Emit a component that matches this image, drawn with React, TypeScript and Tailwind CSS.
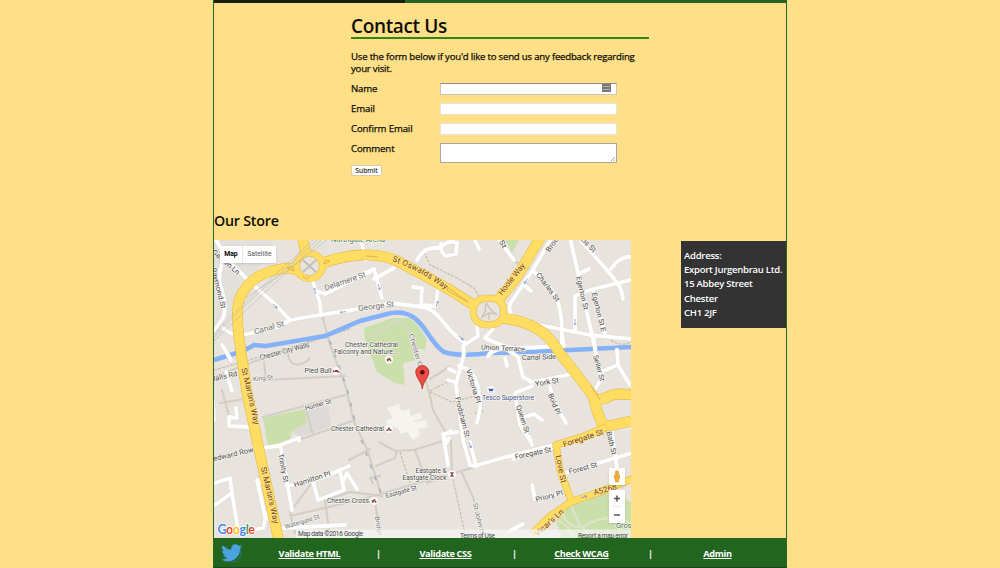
import React from 'react';

type Label = [string, number, number, number, number, string?, number?];

const BROWN = '#74431a';
const GREY = '#707070';
const DARK = '#4c4c4c';

const labels: Label[] = [
  ['Northgate Arena', 358, 240, 0, 54, '#3d7a4a', 7],
  ['Garden Ln', 226, 262, 41, 34],
  ['Raymond St', 218.5, 288, 76, 42],
  ['Delamere St', 345, 281, -19, 43, GREY, 8],
  ['George St', 376, 306, -7, 36, GREY, 8],
  ['Canal St', 269, 327.5, -16, 31, GREY, 8],
  ['Hoole Way', 511.5, 279, -52, 38, BROWN, 8],
  ['Charles St', 548, 287, 53, 34],
  ['Egerton St', 582.5, 293, 77, 34],
  ['Egerton St E', 599, 312, 76, 40],
  ['Brook St', 556, 239, -54, 30],
  ['Francis St', 583, 239, 45, 34],
  ['St', 503, 244, 60, 8],
  ['Chester City Walls', 284.5, 351, -15, 51],
  ['Chester City', 417, 354, 73, 42, GREY, 6.5],
  ['Union Terrace', 503, 348, 3, 44],
  ['Canal Side', 539, 357, -2, 34],
  ['Seller St', 599, 368, 75, 27],
  ['York St', 547, 382, -10, 24],
  ['Bold Pl', 554.5, 404, 68, 22],
  ['Queen St', 523, 419, 72, 29],
  ['Victoria Pl', 473.5, 386, 73, 35],
  ['Frodsham St', 462.5, 417, 76, 41],
  ['King St', 263, 378, -5, 20, GREY, 6.5],
  ['Walls Rd', 223, 376.5, -13, 29],
  ["St Martin's Way", 250.5, 396, 77, 58, BROWN, 8],
  ["St Martin's Way", 270, 495, 77, 58, BROWN, 8],
  ['Hunter St', 318, 404.5, -16, 27, DARK, 6.5],
  ['Bedward Row', 231, 454.5, -13, 46],
  ['Trinity St', 283.5, 468, 79, 29],
  ['Hamilton Pl', 312, 479, -18, 38],
  ['Watergate St', 302, 521.5, -17, 36, GREY, 6.5],
  ['Eastgate St', 401, 491.5, -16, 32, DARK, 6.5],
  ['Bridge St', 379.5, 530, 80, 28, GREY, 6.5],
  ['St John St', 479, 519, 77, 33, GREY, 6.5],
  ['Foregate St', 533, 453, -12, 37],
  ['Foregate St', 583, 438, -18, 42, BROWN, 8],
  ['Love St', 561, 469, 79, 28, BROWN, 8],
  ['Forest St', 583, 468, -14, 29],
  ['Priory Pl', 549, 496, -15, 28],
  ['Bath St', 611.5, 443, 77, 24],
  ["Vicar's Ln", 549, 522.5, -42, 36, BROWN, 8],
  ['A5268', 605, 489.5, -15, 24, BROWN, 8],
  ['Grosvenor Park', 641, 526, 0, 50, '#3d7a4a', 6.5],
  ['Chester Cathedral', 371.5, 344.5, 0, 53, DARK, 6.8],
  ['Falconry and Nature...', 366, 351.5, 0, 64, DARK, 6.8],
  ['Pied Bull', 318, 371, 0, 27, DARK, 6.8],
  ['Chester Cathedral', 357.5, 429, 0, 53, DARK, 6.8],
  ['Chester Cross', 348, 501, 0, 42, DARK, 6.8],
  ['Eastgate &', 431, 471, 0, 31, DARK, 6.8],
  ['Eastgate Clock', 424.5, 478, 0, 44, DARK, 6.8],
  ['Tesco Superstore', 508, 398, 0, 52, '#46558f', 6.8],
];

const mainRoads = [
  'M302 236 L306 254 M279 542 L258 445 L247 393 L240 345 Q235 310 240 298 Q244 287 256 278 Q268 270 287 268 L298 270',
  'M320 264 Q338 257 360 255 Q385 254 401 263 L427 277 L450 290 L475 306',
  'M540 238 L521 270 Q514 282 499 299',
  'M500 318 Q522 320 536 328 Q550 336 559 352 L577 375 L593 396 Q597 414 604 427',
  'M598 400 L606 398 Q612 394 620 394 L635 395 M602 425 L609 426 L635 420',
];

const whiteWide = [
  'M366 260 L363 248 L360 238',
  'M210 252 L232 264 L252 284 L275 304 L289 319',
  'M214 238 Q226 250 220 272 Q218 280 222 291 Q227 308 223 318 L214 331 M223 328 Q233 338 252 333 L278 327 L290 320 L313 316 L352 310 L390 303 L415 306 Q430 306 439 317 Q453 335 465 343',
  'M313 282 L320 303 L321 315',
  'M315 290 L325 294 L345 284 L370 272',
  'M360 275 L374 269 L382 298',
  'M374 279 L394 268',
  'M413 287 L422 288 L421 305 L436 306 L438 286',
  'M417 260 Q424 246 440 248 Q448 239 457 243 L456 254 L446 256 Q440 252 441 244',
  'M473 236 L479 249 M499 240 L514 260',
  'M551 239 L534 268 L510 304 Q508 316 516 318 L540 325 L590 335 L632 339',
  'M533 271 Q548 285 555 295 Q563 310 562 345',
  'M523 284 L531 291',
  'M570 238 L583 295 L594 344 M580 273 L589 269',
  'M581 241 Q604 266 615 280 Q621 285 623 299',
  'M611 269 Q620 255 634 257 M634 279 L590 290 L575 296 L575 330',
  'M593 290 L605 334',
  'M477 326 L478 336 L463 346 L464 354 L460 369 L456 384 L463 440 L470 465 L475 466 L502 458 L557 444',
  'M497 318 L492 330 L485 338 Q510 350 520 348 L564 346 L562 335',
  'M488 357 Q490 350 505 348 L518 357 L523 377 L532 382 L572 374 L570 368',
  'M505 358 L507 366 M532 386 L515 393 L520 425 L531 442 M525 417 L534 414 L542 420',
  'M550 387 L554 401 L566 423 M593 335 L597 362 L603 376 L596 388',
  'M600 372 L618 365 L630 385 M618 364 L617 350',
  'M448 380 L454 382 M449 369 L455 372 M459 366 L470 370 Q481 385 480 408 L477 423',
  'M451 431 L444 435 L445 441 M457 432 L443 434 L448 465',
  'M222 345 L231 360 M226 372 L232 391',
  'M214 420 L213 400 M236 408 L237 418 L229 417 L229 426 L251 427',
  'M215 483 L230 478 L232 493 L215 505 M232 493 L238 530 M240 532 L263 528 M266 514 L264 526',
  'M262 484 L259 481 M257 480 L266 520',
  'M255 449 L278 446 L299 438 L299 441',
  'M281 448 L292 510 M287 486 L322 478 L349 466 M313 481 L318 500 L344 490 L340 471 M342 484 L347 473 M348 475 L357 489',
  'M514 459 L551 449 M529 437 L532 445 M532 485 L535 499 L560 493 M510 531 L523 524 M562 474 L632 453',
  'M611 426 L617 468 M449 438 L446 444',
  'M470 442 L476 466',
  'M284 528 L345 525',
];

const paths = [
  'M214 377 L250 363 L320 338 L350 326',
  'M322 315 L330 345 L346 388 L354 422 L367 449 L382 497',
  'M264 362 L266 380 L345 376',
  'M288 354 Q290 367 301 364 Q309 361 309 358',
  'M222 390 L230 420 M220 403 L244 399 M263 417 L345 395',
  'M306 410 L313 435 L355 420 M313 435 L298 440',
  'M414 338 L421 366 Q428 385 433 410 Q440 423 451 441 L452 475',
  'M379 442 L395 451 L414 450 L443 441 M376 466 L395 458 L397 451 M415 450 L427 483 L461 471 L475 467 M461 471 L473 497 L484 538',
  'M326 500 L350 492 L382 496 M290 516 L363 499 L442 476',
  'M310 485 L290 512 L295 533 M349 460 L370 449 M325 500 L330 538 M375 500 L380 538',
  'M373 483 L370 478 L380 476 M430 379 L449 367 M475 413 L483 411',
];

function Road({ d, color, width }: { d: string; color: string; width: number }) {
  return <path d={d} stroke={color} strokeWidth={width} fill="none" strokeLinecap="round" strokeLinejoin="round" />;
}

function Poi({ x, y, color = '#8a4d43', kind = 'dots' }: { x: number; y: number; color?: string; kind?: string }) {
  return (
    <g transform={`translate(${x} ${y})`}>
      <circle r="4.2" fill="#fff" stroke="#d8d3cb" strokeWidth=".4" />
      {kind === 'dots' && <path d="M-2.2 1.7V-.8H-.5V-1.8H1.4V0H2.4V1.8H.8V.4H-.3V1.7Z" fill={color} />}
      {kind === 'bed' && <path d="M-2.7 1.4V-1M-2.7 .5H2.8V1.4M-1-.5H2" stroke={color} strokeWidth="1" />}
      {kind === 'church' && <path d="M0-2.4L1.2 0L2.7 .9V2H.6V.8H-.6V2H-2.7V.9L-1.2 0Z" fill={color} />}
      {kind === 'cart' && <path d="M-2.8-1.2H2.8L1.8 1H-1.8ZM-1.6 1.5H-.6V2.4H-1.6ZM.6 1.5H1.6V2.4H.6Z" fill={color} />}
      {kind === 'clock' && <path d="M-1.8-2.2H1.8V-1.4L.5 0L1.8 1.4V2.2H-1.8V1.4L-.5 0L-1.8-1.4Z" fill={color} />}
    </g>
  );
}

function Arrow({ x, y, r }: { x: number; y: number; r: number }) {
  return <path transform={`translate(${x} ${y}) rotate(${r})`} d="M-3 0H3M1-1.3L3 0L1 1.3" stroke="#8d9cc8" strokeWidth=".8" fill="none" />;
}

function MapDrawing() {
  return (
    <svg viewBox="214 240 417 298" className="block h-[298px] w-[417px]" fontFamily="Roboto, sans-serif">
      <rect x="214" y="240" width="417" height="298" fill="#e8e4dd" />
      <path d="M214 240H275L214 345Z" fill="#e3dfda" />
      <path d="M292 432L308 422L306 411L328 405L331 426L300 437Z" fill="#dcd9d6" />
      <g fill="#cadfaa">
        <path d="M364 328L393 318L409 318Q418 323 427 340L425 350L418 348L417 360L403 363L405 385L395 383L377 372L365 340Z" />
        <path d="M263 418L305 409L307 423L292 431L290 440L268 448Z" />
        <path d="M505 240H519L512 253Z" />
        <path d="M556 520L573 503L615 491L631 503V538H562Z" />
      </g>
      <path fill="#f6f4ee" d="M387 408L399 404L401 411L409 409L411 416L420 413L423 418L413 421L415 422L426 420L428 427L418 429L420 435L413 440L407 432L400 434L398 428L387 425L386 420L393 418Z" />
      <g stroke="#c6d6a5" strokeWidth="2.4" fill="none">
        <path d="M560 507Q568 532 585 526Q607 512 631 523M557 520Q570 526 574 538M571 505L580 526L594 538" stroke="#dde4c9" />
        <path d="M371 337L398 320L410 331L415 360" stroke="#d9d9c2" />
      </g>
      {paths.map((d, i) => <Road key={i} d={d} color="#d2cec4" width={2.1} />)}
      <g stroke="#c2bdab" strokeWidth="1.2" strokeDasharray="3 1.2" fill="none">
        <path d="M424 252L430 265L455 277L474 288L480 298" />
        <path d="M430 392L452 402L475 396M400 452L410 483M452 475L466 538M430 391L453 379" />
        <path d="M214 370L246 361L350 329M512 254L519 266L533 270M611 340Q622 348 632 341" />
      </g>
      <path d="M214 360L243 351L254 345L266 346L325 336L360 321L387 314Q402 310 413 317C426 325 431 344 444 352Q460 357 490 353L550 351L632 347" stroke="#84b1f8" strokeWidth="4.6" fill="none" />
      {whiteWide.map((d, i) => <Road key={i} d={d} color="#dcd8d0" width={4.6} />)}
      {whiteWide.map((d, i) => <Road key={i} d={d} color="#ffffff" width={3.8} />)}
      <g>
        {mainRoads.map((d, i) => <Road key={i} d={d} color="#e5b84b" width={10.8} />)}
        <ellipse cx="309.5" cy="266" rx="13" ry="12.5" fill="none" stroke="#e5b84b" strokeWidth="7" />
        <rect x="473.5" y="298.5" width="30" height="26" rx="12" fill="none" stroke="#e5b84b" strokeWidth="7.4" />
        {mainRoads.map((d, i) => <Road key={i} d={d} color="#ffdd62" width={9.7} />)}
        <ellipse cx="309.5" cy="266" rx="13" ry="12.5" fill="none" stroke="#ffdd62" strokeWidth="6" />
        <rect x="473.5" y="298.5" width="30" height="26" rx="12" fill="none" stroke="#ffdd62" strokeWidth="6.4" />
        <circle cx="309.5" cy="266" r="9.8" fill="#e8e4dd" stroke="#e5b84b" strokeWidth=".7" />
        <path d="M303 260L316 272M316 260L303 272" stroke="#c2bfb9" strokeWidth="2" />
        <rect x="476.5" y="301.5" width="24" height="20" rx="9" fill="#e8e4dd" stroke="#e5b84b" strokeWidth=".7" />
        <path d="M486 303L485 311L482 317L489 313L496 314L491 310L486 303M489 313V320" stroke="#c9c5ba" strokeWidth="1.4" fill="none" />
      </g>
      <path d="M607 427L582 437L556 445L560 470L571 500M571 502L600 492L634 478M571 502L549 517L532 534" stroke="#e5b84b" strokeWidth="7.4" fill="none" strokeLinejoin="round" />
      <path d="M607 427L582 437L556 445L560 470L571 500M571 502L600 492L634 478M571 502L549 517L532 534" stroke="#ffdd62" strokeWidth="6.2" fill="none" strokeLinejoin="round" />
      <path d="M324 264L330 261L325 260ZM287 268L294 271L292 266ZM303 276L306 279L310 277M446 286L468 302L448 291ZM591 386L600 400M366 256L378 257" stroke="#cda33d" strokeWidth=".7" fill="none" />
      <g stroke="#b0afae" strokeWidth=".6" fill="none" opacity=".8">
        <path d="M214 337L240 310L317 240M214 334L240 307L313 240M214 341L244 312L321 240M247 297L291 268L327 240" />
        <path d="M330 341L347 388L356 426L382 496" stroke="#9aa2bb" strokeDasharray="4 9" strokeWidth="1.5" />
      </g>
      <Arrow x={275} y={306} r={45} /><Arrow x={315} y={291} r={-100} /><Arrow x={343} y={312} r={173} />
      <Arrow x={379} y={287} r={75} /><Arrow x={437} y={304} r={-78} /><Arrow x={461} y={338} r={38} />
      <Arrow x={526} y={281} r={124} /><Arrow x={575} y={322} r={90} /><Arrow x={470} y={445} r={70} />
      <Arrow x={584} y={497} r={-18} />
      {labels.map(([t, x, y, a, len, c = DARK, s = 7.2], i) => (
        <text key={i} transform={`translate(${x} ${y}) rotate(${a})`} y={s * 0.35} textAnchor="middle" textLength={len} lengthAdjust="spacingAndGlyphs"
          fontSize={s} fill={c} stroke={c === BROWN ? '#ffe48a' : '#f8f6f2'} strokeWidth="1.4" strokeLinejoin="round" paintOrder="stroke">{t}</text>
      ))}
      <path id="oswalds" d="M392 261Q421 271 449 292" fill="none" />
      <text fontSize="8" fill={BROWN} stroke="#ffe48a" strokeWidth="1.2" paintOrder="stroke">
        <textPath href="#oswalds" textLength="61">St Oswalds Way</textPath>
      </text>
      <Poi x={389} y={359.5} />
      <Poi x={336} y={371} kind="bed" color="#a23c3c" />
      <Poi x={389} y={429} kind="church" />
      <Poi x={491} y={390} kind="cart" color="#4a62b5" />
      <Poi x={452} y={474.5} kind="clock" />
      <Poi x={374} y={501} />
      <path d="M422.3 389C421.5 381 415.8 378 415.8 372A6.5 6.5 0 0 1 428.8 372C428.8 378 423.1 381 422.3 389Z" fill="#ea4c45" stroke="#b22822" strokeWidth=".8" />
      <circle cx="422.3" cy="372.2" r="2.3" fill="#541311" />
      <rect x="296" y="529.5" width="335" height="9" fill="#f5f5f5" opacity=".72" />
      <g fontSize="6.6" fill="#444">
        <text x="298" y="535.5" textLength="65">Map data ©2016 Google</text>
        <text x="460" y="538" textLength="35">Terms of Use</text>
        <text x="578" y="538" textLength="50">Report a map error</text>
      </g>
      <text x="217.5" y="534" fontFamily="Lato, sans-serif" fontSize="12.5" fontWeight="700" textLength="37.5" stroke="#fff" strokeWidth="1.4" paintOrder="stroke">
        <tspan fill="#4285f4">G</tspan><tspan fill="#ea4335">o</tspan><tspan fill="#fbbc05">o</tspan><tspan fill="#4285f4">g</tspan><tspan fill="#34a853">l</tspan><tspan fill="#ea4335">e</tspan>
      </text>
    </svg>
  );
}

function StoreMap() {
  return (
    <div className="relative h-[298px] w-[417px] overflow-hidden">
      <MapDrawing />
      <div className="absolute top-[6px] left-[6px] flex h-[17px] w-[56px] items-center rounded-[1px] bg-white font-[Roboto,sans-serif] text-[6.8px] shadow-sm">
        <span className="w-[23px] border-r border-gray-200 text-center leading-[17px] font-bold text-black">Map</span>
        <span className="flex-1 text-center text-[#555]">Satellite</span>
      </div>
      <div className="absolute right-[6px] bottom-[15px] flex w-4 flex-col gap-[5px]">
        <div className="flex h-[17px] items-center justify-center rounded-[1px] bg-white shadow-sm">
          <svg viewBox="0 0 8 14" className="h-[13px] w-2">
            <path d="M1.5 5.2Q4 3.8 6.5 5.2L7.2 9L6 9.4L5.6 13H2.4L2 9.4L.8 9Z" fill="#f2ae33" stroke="#b57b1b" strokeWidth=".4" />
            <circle cx="4" cy="2.8" r="2.1" fill="#f2ae33" stroke="#b57b1b" strokeWidth=".4" />
          </svg>
        </div>
        <div className="flex h-[33px] flex-col items-center rounded-[1px] bg-white shadow-sm">
          <svg viewBox="0 0 16 33" className="h-[33px] w-4" stroke="#555" strokeWidth="1.6">
            <path d="M5 8.5H11M8 5.5V11.5M5 25H11" />
            <path d="M3 16.5H13" stroke="#e3e3e3" strokeWidth=".7" />
          </svg>
        </div>
      </div>
    </div>
  );
}

function Field({ label, children }: { label: string; children: React.ReactNode }) {
  return (
    <div className="flex h-5 items-start">
      <label className="w-[89px] text-[9.6px] leading-[12px] tracking-[-0.12px]">{label}</label>
      {children}
    </div>
  );
}

function Footer() {
  return (
    <footer className="flex h-[30px] items-center border-b border-[#174a18] bg-[#22651f] text-[9.2px] font-bold text-white">
      <svg viewBox="0 0 24 24" className="ml-[7px] h-[22px] w-[22px] shrink-0">
        <circle cx="12" cy="12" r="9.8" fill="none" stroke="#287aa2" strokeWidth="1" strokeDasharray="17 6" />
        <path fill="#4ba3df" d="M23 4.9a9.6 9.6 0 0 1-2.7.8 4.7 4.7 0 0 0 2-2.6 9.4 9.4 0 0 1-2.9 1.1 4.6 4.6 0 0 0-8 4.2A13.2 13.2 0 0 1 1.9 3.6a4.6 4.6 0 0 0 1.5 6.2 4.6 4.6 0 0 1-2.1-.6 4.7 4.7 0 0 0 3.7 4.6 4.6 4.6 0 0 1-2.1.1 4.7 4.7 0 0 0 4.4 3.2 9.3 9.3 0 0 1-6.9 1.9A13.2 13.2 0 0 0 20.7 7.2 9.4 9.4 0 0 0 23 4.9Z" />
      </svg>
      <nav className="flex items-center pt-[2px] tracking-[-0.35px]">
        <a className="w-[133px] text-center underline">Validate HTML</a>
        <span className="w-[3px] text-center">|</span>
        <a className="w-[133px] text-center underline">Validate CSS</a>
        <span className="w-[3px] text-center">|</span>
        <a className="w-[133px] text-center underline">Check WCAG</a>
        <span className="w-[3px] text-center">|</span>
        <a className="w-[133px] text-center underline">Admin</a>
      </nav>
    </footer>
  );
}

export default function App() {
  return (
    <div className="flex h-[568px] flex-col overflow-hidden bg-[#ffdf88] font-['Open_Sans',sans-serif] text-[#0d0d05]">
      <div className="ml-[213px] flex h-[568px] w-[574px] flex-col border-x border-[#2c6529]">
        <div className="flex h-[3px] shrink-0">
          <div className="w-[191px] bg-[#17200a]" />
          <div className="flex-1 bg-[#276223]" />
        </div>
        <section className="ml-[137px] h-[207px] w-[298px] pt-[10px]">
          <h1 className="h-[26px] border-b-2 border-[#2f8616] text-[19px] leading-[26px] font-semibold tracking-[-0.35px]">Contact Us</h1>
          <div className="[-webkit-text-stroke:0.25px_#0d0d05]">
            <p className="mt-[12px] text-[9.6px] leading-[11.5px] tracking-[-0.2px] whitespace-nowrap">
              Use the form below if you'd like to send us any feedback regarding<br />your visit.
            </p>
            <form className="mt-[9px]">
              <Field label="Name">
                <div className="flex h-3 w-[177px] justify-end border border-[#c9c3b8] border-t-[#8d8b88] bg-white pr-[5px]">
                  <svg viewBox="0 0 9 8" className="h-2 w-[9px]">
                    <rect width="9" height="8" fill="#777" />
                    <path d="M1 2.5H8M1 5.5H8" stroke="#d6d6d6" strokeWidth=".9" strokeDasharray="1.5 .6" />
                  </svg>
                </div>
              </Field>
              <Field label="Email"><div className="h-3 w-[177px] border border-[#e8e3d8] bg-white" /></Field>
              <Field label="Confirm Email"><div className="h-3 w-[177px] border border-[#e8e3d8] bg-white" /></Field>
              <Field label="Comment">
                <div className="flex h-5 w-[177px] items-end justify-end border border-[#aaa69d] bg-white">
                  <svg viewBox="0 0 6 6" className="h-[6px] w-[6px]"><path d="M1 5L5 1M3.5 5L5 3.5" stroke="#777" strokeWidth=".7" /></svg>
                </div>
              </Field>
              <button type="button" className="mt-[2px] block h-[11px] w-[31px] rounded-[2px] border border-[#d9cba4] bg-white text-[6.8px] leading-[8px] [-webkit-text-stroke:0.1px]">Submit</button>
            </form>
          </div>
        </section>
        <h2 className="h-[30px] text-[14.3px] leading-[21px] font-semibold tracking-[-0.25px]">Our Store</h2>
        <div className="flex h-[298px] items-start justify-between">
          <StoreMap />
          <address className="mt-px h-[87px] w-[105px] bg-[#333333] pt-[8px] pl-[3px] text-[9.5px] leading-[14.2px] font-semibold tracking-[-0.25px] whitespace-nowrap text-white not-italic">
            Address:<br />Export Jurgenbrau Ltd.<br />15 Abbey Street<br />Chester<br />CH1 2JF
          </address>
        </div>
        <Footer />
      </div>
    </div>
  );
}
